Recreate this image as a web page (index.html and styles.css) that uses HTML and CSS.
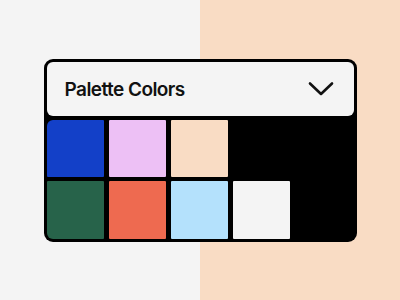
FILE: index.html
```html
<!DOCTYPE html>
<html>
<head>
<meta charset="utf-8">
<link rel="stylesheet" href="styles.css">
</head>
<body>
<div class="stage">
  <div class="card">
    <div class="header">
      <span class="title">Palette Colors</span>
      <svg class="chev" width="26" height="16" viewBox="0 0 26 16"><path d="M2 2.5 L13 13 L24 2.5" fill="none" stroke="#111" stroke-width="2.6" stroke-linecap="round" stroke-linejoin="round"/></svg>
    </div>
    <div class="grid">
      <div class="sw blue"></div>
      <div class="sw pink"></div>
      <div class="sw peach"></div>
      <div class="sw empty"></div>
      <div class="sw empty"></div>
      <div class="sw green"></div>
      <div class="sw red"></div>
      <div class="sw sky"></div>
      <div class="sw white"></div>
    </div>
  </div>
</div>
</body>
</html>
```
FILE: styles.css
```css
html, body { margin: 0; padding: 0; }
body {
  width: 400px;
  height: 300px;
  background: linear-gradient(to right, #f4f4f4 0, #f4f4f4 200px, #f9dcc4 200px, #f9dcc4 100%);
  font-family: Inter, "Noto Sans", sans-serif;
}
.stage {
  width: 400px;
  height: 300px;
  display: flex;
  align-items: center;
  justify-content: center;
}
.card {
  width: 313px;
  box-sizing: border-box;
  background: #000;
  border-radius: 9px;
  padding: 3px;
  display: flex;
  flex-direction: column;
  gap: 4px;
}
.header {
  height: 54px;
  background: #f4f4f4;
  border-radius: 6px;
  display: flex;
  align-items: center;
  justify-content: space-between;
  padding: 0 20px 0 18px;
}
.title {
  font-size: 19px;
  font-weight: 600;
  color: #111;
  letter-spacing: -0.55px;
  margin-top: 2px;
}
.chev { display: block; margin-top: 1px; }
.grid {
  display: grid;
  grid-template-columns: repeat(5, 57.5px);
  grid-template-rows: 57.5px 57.5px;
  column-gap: 4.5px;
  row-gap: 4px;
  border-radius: 0 0 0 6px;
  overflow: hidden;
}
.sw { border-radius: 1px; }
.blue { background: #1340c8; border-top-left-radius: 6px; }
.pink { background: #edc0f5; }
.peach { background: #f9dcc4; }
.empty { background: transparent; }
.green { background: #27634a; }
.red { background: #ee6a50; }
.sky { background: #b4e1fc; }
.white { background: #f4f4f4; }
```
